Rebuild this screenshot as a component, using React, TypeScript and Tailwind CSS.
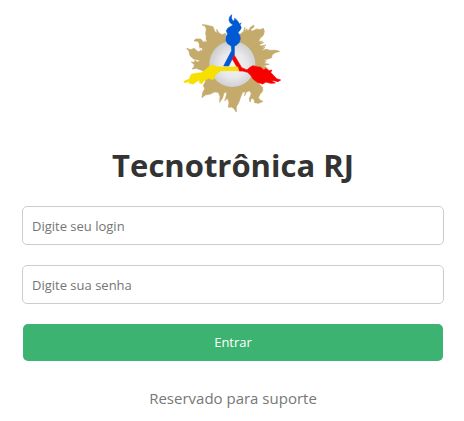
function Logo() {
  return (
    <svg viewBox="0 0 318 318" className="h-[106px] w-[106px]" role="img" aria-label="Tecnotrônica RJ">
      <defs>
        <radialGradient id="sphere" cx="0.52" cy="0.52" r="0.55">
          <stop offset="0" stopColor="#f4f4f5" />
          <stop offset="0.5" stopColor="#e9e9eb" />
          <stop offset="1" stopColor="#c9cacd" />
        </radialGradient>
      </defs>
      <path
        fill="#c4aa6b"
        stroke="#c4aa6b"
        strokeWidth="2"
        strokeLinejoin="round"
        d="M138 94 L135 82 L138 70 L126 74 L116 68 L110 58 L111 70 L104 64 L99 50 L90 48 L79 45 L66 44 L76 49 L79 58 L77 70 L79 80 L75 92 L79 96 L70 96 L62 87 L47 87 L42 93 L54 94 L58 102 L58 112 L64 120 L56 125 L48 121 L43 115 L32 119 L20 115 L27 124 L30 137 L41 147 L55 150 L62 153 L51 156 L45 151 L43 157 L34 156 L43 164 L42 171 L36 177 L49 175 L63 180 L84 190 L78 205 L76 216 L70 226 L74 236 L68 248 L66 263 L76 255 L91 252 L103 246 L115 247 L120 259 L119 277 L128 263 L132 249 L140 245 L139 257 L134 272 L142 265 L147 276 L145 292 L154 291 L161 295 L169 306 L169 290 L176 278 L183 258 L188 247 L196 245 L194 257 L199 246 L209 242 L214 251 L208 266 L210 276 L214 265 L222 267 L224 278 L236 280 L249 274 L241 271 L235 263 L240 253 L248 243 L248 232 L238 223 L230 207 L230 177 L240 176 L265 179 L258 171 L247 168 L268 163 L252 160 L259 153 L249 150 L261 148 L275 143 L276 135 L285 128 L299 124 L287 121 L270 121 L258 118 L245 122 L255 112 L244 115 L258 105 L243 108 L237 104 L251 98 L240 97 L247 93 L236 96 L240 85 L250 76 L253 64 L250 55 L240 59 L230 57 L216 64 L212 58 L221 52 L222 45 L212 51 L204 64 L200 56 L194 67 L195 52 L190 65 L180 73 L178 90 L171 105 L157 115 Z"
      />
      <path fill="#fff" d="M81 96 L76 83 L69 83 L76 92Z M67 116 L57 112 L65 123Z" />
      <circle cx="157" cy="162" r="69" fill="url(#sphere)" />
      <path
        fill="#0058d3"
        stroke="#0058d3"
        strokeWidth="2"
        strokeLinejoin="round"
        d="M131 168 L155 122 L154 108 L143 101 L138 92 L138 80 L143 72 L139 62 L144 54 L153 49 L160 45 L151 39 L147 30 L149 21 L155 14 L154 24 L158 32 L163 33 L164 25 L172 32 L178 41 L176 51 L173 59 L173 66 L179 75 L181 86 L178 97 L171 104 L163 109 L163 134 L146 168 Z"
      />
      <path fill="#0058d3" d="M172 46 L185 37 L181 45 L185 53 L180 62 L172 70Z" />
      <path
        fill="#f80000"
        stroke="#f80000"
        strokeWidth="2"
        strokeLinejoin="round"
        d="M163 136 L185 173 L201 180 L210 172 L219 167 L230 170 L242 172 L250 179 L258 176 L267 182 L276 180 L272 187 L282 198 L290 206 L302 210 L294 215 L282 212 L274 212 L286 219 L272 220 L258 216 L248 222 L232 217 L220 208 L212 196 L203 187 L188 183 L178 183 L157 147 Z"
      />
      <path
        fill="#f7df00"
        stroke="#f7df00"
        strokeWidth="2"
        strokeLinejoin="round"
        d="M130 171 L173 171 L176 182 L122 182 L108 193 L99 209 L86 205 L74 211 L65 221 L58 218 L60 210 L49 215 L40 222 L28 220 L27 215 L13 218 L12 214 L28 207 L34 193 L48 190 L64 188 L76 180 L86 170 L98 166 L110 170 Z"
      />
    </svg>
  );
}

const inputClass =
  "block h-[39px] w-full rounded-[5px] border border-[#cccccc] bg-white px-[9px] text-[13px] text-[#333333] outline-none placeholder:text-[#757575]";

export default function App() {
  return (
    <main className="bg-white pt-2.5 pr-5 pb-3 pl-[22px] font-['Open_Sans','Noto_Sans',sans-serif]">
      <div className="flex justify-center">
        <Logo />
      </div>
      <h1 className="mt-7 text-center text-[31px] leading-[42px] font-bold text-[#333333]">Tecnotrônica RJ</h1>
      <form className="mt-5 flex flex-col gap-5" onSubmit={(e) => e.preventDefault()}>
        <input className={inputClass} type="text" placeholder="Digite seu login" aria-label="Digite seu login" />
        <input className={inputClass} type="password" placeholder="Digite sua senha" aria-label="Digite sua senha" />
        <button type="submit" className="mx-px h-[37px] rounded-[5px] bg-[#3cb371] text-[13px] text-white">
          Entrar
        </button>
      </form>
      <p className="mt-[25px] text-center text-[15px] leading-6 text-[#777777]">Reservado para suporte</p>
    </main>
  );
}
